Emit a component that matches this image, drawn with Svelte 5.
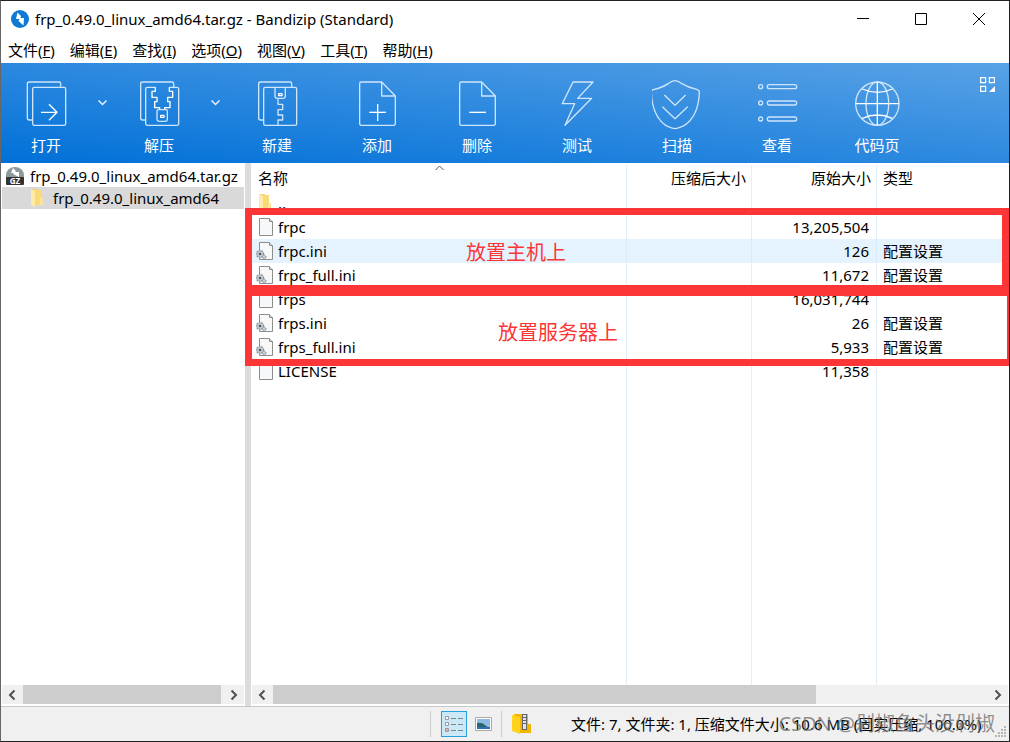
<script>
    const menus = [
        { name: '文件', key: 'F' },
        { name: '编辑', key: 'E' },
        { name: '查找', key: 'I' },
        { name: '选项', key: 'O' },
        { name: '视图', key: 'V' },
        { name: '工具', key: 'T' },
        { name: '帮助', key: 'H' }
    ];

    const tools = [
        { id: 'open', label: '打开', menu: true },
        { id: 'extract', label: '解压', menu: true },
        { id: 'new', label: '新建' },
        { id: 'add', label: '添加' },
        { id: 'delete', label: '删除' },
        { id: 'test', label: '测试' },
        { id: 'scan', label: '扫描' },
        { id: 'view', label: '查看' },
        { id: 'codepage', label: '代码页' }
    ];

    const files = [
        { name: '..', icon: 'folder', size: '', type: '' },
        { name: 'frpc', icon: 'file', size: '13,205,504', type: '' },
        { name: 'frpc.ini', icon: 'ini', size: '126', type: '配置设置' },
        { name: 'frpc_full.ini', icon: 'ini', size: '11,672', type: '配置设置' },
        { name: 'frps', icon: 'file', size: '16,031,744', type: '' },
        { name: 'frps.ini', icon: 'ini', size: '26', type: '配置设置' },
        { name: 'frps_full.ini', icon: 'ini', size: '5,933', type: '配置设置' },
        { name: 'LICENSE', icon: 'file', size: '11,358', type: '' }
    ];

    // each icon is drawn on its own 150 unit square
    const boxes = {
        open: '63 48 150 150',
        extract: '402 48 150 150',
        new: '756 48 150 150',
        add: '66 48 150 150',
        delete: '366 48 150 150',
        test: '666 48 150 150',
        scan: '96 48 150 150',
        view: '396 48 150 150',
        codepage: '696 48 150 150'
    };

    let current = $state('frpc.ini');
</script>

{#snippet folder()}
    <svg class="icon" viewBox="0 0 18 20" aria-hidden="true">
        <path d="M3 1h6v16H3z" fill="#f5d06e" />
        <path d="M3 1l4 2v16l-4-2z" fill="#ffeaa6" />
        <path d="M7 2h6v15H7z" fill="#f9d978" />
        <path d="M12 10h3v7h-3z" fill="#ffe39a" />
    </svg>
{/snippet}

{#snippet page(gear)}
    <svg class="icon" viewBox="0 0 18 20" aria-hidden="true">
        <path d="M3.5 1.5h10l3 3v14h-13z" fill="#f7f8f9" stroke="#8d8d8d" />
        <path d="M13.5 1.5v3h3" fill="#ddd" stroke="#8d8d8d" />
        {#if gear}
            <circle cx="4" cy="13" r="3.5" fill="#c3cbd1" stroke="#8b949b" stroke-width="1.5" stroke-dasharray="1.5 1" />
            <circle cx="4" cy="13" r="1.2" fill="#4d555b" />
            <circle cx="8" cy="16" r="2" fill="#c3cbd1" stroke="#8b949b" stroke-dasharray="1.5 1" />
        {/if}
    </svg>
{/snippet}

{#snippet arrow(d)}
    <svg width="10" height="12" viewBox="0 0 10 12" fill="none" stroke="#505050" stroke-width="2" aria-hidden="true">
        <path {d} />
    </svg>
{/snippet}

{#snippet scrollbar(thumb)}
    <div class="scrollbar">
        <button aria-label="向左滚动">{@render arrow('M6.5 1.5L2 6l4.5 4.5')}</button>
        <div class="track"><div class="thumb" style="width: {thumb}%"></div></div>
        <button aria-label="向右滚动">{@render arrow('M2.5 1.5L7 6l-4.5 4.5')}</button>
    </div>
{/snippet}

<div class="window">
    <header class="titlebar">
        <svg class="logo" width="20" height="20" viewBox="0 0 20 20" aria-hidden="true">
            <circle cx="10" cy="10" r="9" fill="#1079d4" />
            <path d="M7.5 3.5L6 10h3.500L8.500 12l5 4.500L14 9h-3.500l.5-2z" fill="#fff" />
        </svg>
        <h1>frp_0.49.0_linux_amd64.tar.gz - Bandizip (Standard)</h1>
        <div class="controls">
            <button aria-label="最小化"><svg width="12" height="12" viewBox="0 0 12 12"><path d="M0 5.5h12" /></svg></button>
            <button aria-label="最大化"><svg width="12" height="12" viewBox="0 0 12 12"><path d="M.5.5h11v11H.5z" /></svg></button>
            <button aria-label="关闭"><svg width="12" height="12" viewBox="0 0 12 12"><path d="M0 0l12 12M12 0L0 12" /></svg></button>
        </div>
    </header>

    <nav class="menubar">
        {#each menus as menu}
            <button>{menu.name}(<u>{menu.key}</u>)</button>
        {/each}
    </nav>

    <div class="toolbar">
        {#each tools as tool}
            <button class="tool" class:split={tool.menu}>
                <svg width="50" height="50" viewBox={boxes[tool.id]} fill="none" stroke="#cfe5fa" stroke-width="4" stroke-linejoin="round" aria-hidden="true">
                    {#if tool.id === 'open'}
                        <path d="M98 168h-10q-6 0-6-6V59q0-5 6-5h89q5 0 5 5v9" />
                        <rect x="98" y="70" width="99" height="114" rx="5" />
                        <path d="M123 145h46M147 121l24 24-24 24" stroke="#fff" />
                    {:else if tool.id === 'extract'}
                        <path d="M437 168h-9q-6 0-6-6V59q0-5 6-5h88q5 0 5 5v11" />
                        <path d="M466 70h-24q-5 0-5 5v104q0 5 5 5h89q5 0 5-5V75q0-5-5-5h-23" />
                        <path d="M466 70v12h-10v18h15v13h-7v18h15v6M508 70v12h10v18h-15v13h7v18h-16v6" stroke="#fff" />
                        <path d="M475 137h23q4 0 4 4v24q0 7-7 7h-17q-7 0-7-7v-24q0-4 4-4z" />
                        <path d="M482 154h10v6h-10z" stroke="#fff" />
                    {:else if tool.id === 'new'}
                        <path d="M791 168h-9q-6 0-6-6V59q0-5 6-5h88q5 0 5 5v11" />
                        <rect x="791" y="70" width="99" height="114" rx="5" />
                        <path d="M825 70v26q0 7 7 7h17q7 0 7-7V70M834 103v18h14v16h-14v16h14v15h-14v16" />
                        <path d="M836 89h10v6h-10z" stroke="#fff" />
                    {:else if tool.id === 'add' || tool.id === 'delete'}
                        <g transform={tool.id === 'delete' ? 'translate(300 0)' : undefined}>
                            <path d="M155 54H94q-5 0-5 5v119q0 6 5 6h97q5 0 5-6V96zv42h41" />
                            <path d="M118 145h50" stroke="#fff" />
                            {#if tool.id === 'add'}
                                <path d="M143 120v51" stroke="#fff" />
                            {/if}
                        </g>
                    {:else if tool.id === 'test'}
                        <path d="M729 54h60l-46 49h42l-80 81 29-65h-37z" />
                    {:else if tool.id === 'scan'}
                        <path d="M165 50q8 0 19 8 20 12 48 19 7 2 6 10-3 70-46 98-19 9-27 9t-27-9Q97 156 94 87q-1-8 6-10 28-7 46-19 11-8 19-8z" />
                        <path d="M133 93l32 31 32-31M127 128l38 36 38-36" />
                    {:else if tool.id === 'view'}
                        {#each [68, 117, 165] as y}
                            <circle cx="422" cy={y} r="6" />
                            <rect x="442" y={y - 6} width="88" height="12" rx="6" />
                        {/each}
                    {:else}
                        <circle cx="772" cy="119" r="65" />
                        <ellipse cx="772" cy="119" rx="34" ry="65" />
                        <path d="M772 54v130M707 119h130M727 75q45 20 90 0M727 163q45-20 90 0" stroke="#fff" />
                    {/if}
                </svg>
                <span>{tool.label}</span>
            </button>
            {#if tool.menu}
                <button class="drop" aria-label="{tool.label}选项">
                    <svg width="9" height="6" viewBox="0 0 9 6" fill="none" stroke="#e4f1fc" stroke-width="1.5"><path d="M.5.5l4 4 4-4" /></svg>
                </button>
            {/if}
        {/each}
        <button class="layout" aria-label="布局">
            <svg width="15" height="15" viewBox="0 0 15 15" fill="none" stroke="#fff" stroke-width="1.2">
                <path d="M.6.6h5v5h-5zM9.4.6h5v5h-5zM.6 9.4h5v5h-5z" />
                <path d="M15 9v6H9z" fill="#fff" stroke="none" />
            </svg>
        </button>
    </div>

    <main class="main">
        <aside class="sidebar">
            <ul class="tree">
                <li>
                    <svg width="20" height="20" viewBox="0 0 20 20" aria-hidden="true">
                        <path d="M1 12V9a9 8 0 0 1 18 0v3z" fill="#8b9a9b" />
                        <path d="M8 2L6 7h3L8 8l6 3V6h-4l1-1z" fill="#fff" />
                        <rect x="1" y="11" width="18" height="8" rx="1" fill="#333" />
                        <text x="10" y="18" text-anchor="middle">GZ</text>
                    </svg>
                    <span>frp_0.49.0_linux_amd64.tar.gz</span>
                </li>
                <li class="child selected">
                    {@render folder()}
                    <span>frp_0.49.0_linux_amd64</span>
                </li>
            </ul>
            {@render scrollbar(99)}
        </aside>
        <div class="splitter"></div>
        <section class="files">
            <div class="list">
                <table>
                    <colgroup>
                        <col class="c-name" />
                        <col class="c-size" />
                        <col class="c-size" />
                        <col />
                    </colgroup>
                    <thead>
                        <tr>
                            <th>
                                名称
                                <svg class="sort" width="9" height="6" viewBox="0 0 9 6" fill="none" stroke="#555" aria-hidden="true"><path d="M.5 5l4-4 4 4" /></svg>
                            </th>
                            <th class="num">压缩后大小</th>
                            <th class="num">原始大小</th>
                            <th>类型</th>
                        </tr>
                    </thead>
                    <tbody>
                        {#each files as file}
                            <tr class:current={current === file.name} onclick={() => (current = file.name)}>
                                <td>
                                    <div class="name">
                                        {#if file.icon === 'folder'}
                                            {@render folder()}
                                        {:else}
                                            {@render page(file.icon === 'ini')}
                                        {/if}
                                        <span>{file.name}</span>
                                    </div>
                                </td>
                                <td></td>
                                <td class="num">{file.size}</td>
                                <td>{file.type}</td>
                            </tr>
                        {/each}
                    </tbody>
                </table>
            </div>
            {@render scrollbar(76)}
        </section>

        <div class="note client"><span>放置主机上</span></div>
        <div class="note server"><span>放置服务器上</span></div>
    </main>

    <footer class="statusbar">
        <div class="views">
            <button class="active" aria-label="详细信息">
                <svg width="20" height="18" viewBox="0 0 20 18" fill="none" aria-hidden="true">
                    <path d="M1.5 1.5h3v3h-3zM1.5 7.5h3v3h-3zM1.5 13.5h3v3h-3z" fill="#fff" stroke="#999" />
                    <path d="M7 3.5h5M7 9.5h5M7 15.5h5M14 3.5h5M14 9.5h5M14 15.5h5" stroke="#7b8790" />
                    <path d="M2 15h2" stroke="#d55" />
                </svg>
            </button>
            <button aria-label="缩略图">
                <svg width="17" height="16" viewBox="0 0 17 16" aria-hidden="true">
                    <path d="M.5 1.5h16v13H.5z" fill="#fff" stroke="#aaa" />
                    <path d="M2 3h13v10H2z" fill="#8ebbe4" />
                    <path d="M2 7q5-1 8 2t5 2v2H2z" fill="#2d6470" />
                    <path d="M2 11h13v2H2z" fill="#2971b5" />
                </svg>
            </button>
        </div>
        <svg class="archive" width="20" height="22" viewBox="0 0 20 22" aria-hidden="true">
            <path d="M3 1h14v18H6z" fill="#f2b500" />
            <path d="M1 2l8 2v17l-8-3z" fill="#ffd21c" />
            <path d="M11 1h5v16h-5z" fill="#666" />
            <path d="M12 2h3v2h-3zM12 5h3v2h-3zM12 8h3v2h-3zM12 11h3v5h-3z" fill="#e4e4e4" />
            <path d="M17 11h3v9H9v-2h8z" fill="#f2b500" />
        </svg>
        <p>文件: 7, 文件夹: 1, 压缩文件大小: 10.6 MB (固实压缩, 100.0%)</p>
        <span class="watermark">CSDN @剁椒鱼头没剁椒</span>
        <svg class="grip" width="13" height="13" viewBox="0 0 13 13" fill="#b5b5b5" aria-hidden="true">
            <path d="M10 0h2v2h-2zM10 3h2v2h-2zM10 6h2v2h-2zM10 9h2v2h-2zM7 3h2v2H7zM7 6h2v2H7zM7 9h2v2H7zM4 6h2v2H4zM4 9h2v2H4zM1 9h2v2H1z" />
        </svg>
    </footer>
</div>

<style>
    :global(body) {
        margin: 0;
    }

    .window {
        display: flex;
        flex-direction: column;
        box-sizing: border-box;
        height: 100vh;
        border: 1px solid #222;
        border-left-color: #666;
        background: #fff;
        color: #000;
        font: 15px/20px "Noto Sans", "Noto Sans CJK SC", sans-serif;
        overflow: hidden;
    }

    button {
        padding: 0;
        border: 0;
        background: none;
        color: inherit;
        font: inherit;
    }

    svg {
        display: block;
        flex: none;
    }

    .titlebar {
        display: flex;
        align-items: center;
        flex: none;
        height: 36px;
        padding: 0 1px 0 9px;
    }

    .titlebar h1 {
        flex: 1;
        margin: 0 0 0 5px;
        font-size: 15px;
        font-weight: 400;
    }

    .controls {
        display: flex;
        height: 100%;
    }

    .controls button {
        display: flex;
        align-items: center;
        justify-content: center;
        width: 58px;
    }

    .controls path {
        fill: none;
        stroke: #000;
    }

    .menubar {
        display: flex;
        flex: none;
        gap: 15px;
        height: 26px;
        padding-left: 7px;
    }

    .toolbar {
        display: flex;
        flex: none;
        height: 100px;
        background: linear-gradient(to top right, #0070d8, #59a2e6);
        color: #fff;
    }

    .tool {
        display: flex;
        flex-direction: column;
        align-items: center;
        gap: 5px;
        width: 100px;
        padding-top: 17px;
    }

    .tool.split {
        width: 90px;
    }

    .drop {
        display: flex;
        justify-content: center;
        width: 23px;
        padding-top: 37px;
    }

    .layout {
        display: flex;
        margin-left: auto;
        padding: 14px 14px 0 0;
    }

    .main {
        position: relative;
        display: flex;
        flex: 1;
        min-height: 0;
        overflow: hidden;
        border-bottom: 1px solid #c8c8c8;
    }

    .sidebar,
    .files {
        display: flex;
        flex-direction: column;
        padding: 2px 1px;
    }

    .sidebar {
        flex: none;
        box-sizing: border-box;
        width: 244px;
    }

    .tree {
        flex: 1;
        margin: 0;
        padding: 0;
        list-style: none;
    }

    .tree li {
        display: flex;
        align-items: center;
        gap: 5px;
        height: 22px;
        padding-left: 3px;
        overflow: hidden;
        white-space: nowrap;
    }

    .tree .child {
        gap: 7px;
        padding-left: 26px;
    }

    .tree .selected {
        background: #d9d9d9;
    }

    .tree text {
        fill: #fff;
        font-size: 8px;
        font-weight: 700;
    }

    .icon {
        width: 18px;
        height: 20px;
    }

    .splitter {
        flex: none;
        width: 6px;
        background: #dcdcdc;
    }

    .files {
        flex: 1;
        min-width: 0;
    }

    .list {
        flex: 1;
        background:
            linear-gradient(#e4eef9, #e4eef9) 374px 0 / 1px 100% no-repeat,
            linear-gradient(#e4eef9, #e4eef9) 499px 0 / 1px 100% no-repeat,
            linear-gradient(#e4eef9, #e4eef9) 624px 0 / 1px 100% no-repeat;
    }

    table {
        width: 100%;
        table-layout: fixed;
        border-collapse: collapse;
    }

    .c-name {
        width: 375px;
    }

    .c-size {
        width: 125px;
    }

    th,
    td {
        height: 24px;
        padding: 0 8px 0 6px;
        font-weight: 400;
        text-align: left;
        white-space: nowrap;
    }

    th {
        position: relative;
        height: 26px;
        padding-right: 6px;
    }

    .num {
        text-align: right;
    }

    .sort {
        position: absolute;
        top: 0;
        left: 0;
        right: 0;
        margin: 0 auto;
    }

    .name {
        display: flex;
        align-items: center;
        gap: 4px;
        margin-left: -2px;
    }

    .current {
        background: rgba(204, 232, 255, 0.5);
    }

    .scrollbar {
        display: flex;
        flex: none;
        height: 19px;
        background: #f0f0f0;
    }

    .scrollbar button {
        display: flex;
        align-items: center;
        justify-content: center;
        width: 21px;
    }

    .track {
        flex: 1;
    }

    .thumb {
        height: 100%;
        background: #cdcdcd;
    }

    .note {
        position: absolute;
        left: 244px;
        right: 0;
        box-sizing: border-box;
        border: 7px solid #fc3636;
        color: #fc3636;
        font-size: 20px;
        pointer-events: none;
    }

    .note.client {
        top: 45px;
        height: 84px;
        padding: 28px 0 0 214px;
    }

    .note.server {
        top: 126px;
        right: -5px;
        height: 77px;
        padding: 27px 0 0 246px;
    }

    .statusbar {
        position: relative;
        display: flex;
        align-items: center;
        flex: none;
        height: 34px;
        background: #f0f0f0;
    }

    .views {
        display: flex;
        gap: 3px;
        margin-left: 429px;
        padding: 0 5px 0 10px;
        border: solid #cdcdcd;
        border-width: 0 1px;
    }

    .views button {
        display: flex;
        align-items: center;
        justify-content: center;
        box-sizing: border-box;
        width: 26px;
        height: 26px;
    }

    .views .active {
        border: 1px solid #26a0da;
        background: #cbe8f6;
    }

    .archive {
        margin-left: 9px;
    }

    .statusbar p {
        flex: 1;
        margin: 0 0 0 40px;
        white-space: nowrap;
    }

    .watermark {
        position: absolute;
        right: 14px;
        color: rgba(110, 110, 110, 0.75);
        font-size: 20px;
        white-space: nowrap;
    }

    .grip {
        position: absolute;
        right: 2px;
        bottom: 2px;
    }
</style>
